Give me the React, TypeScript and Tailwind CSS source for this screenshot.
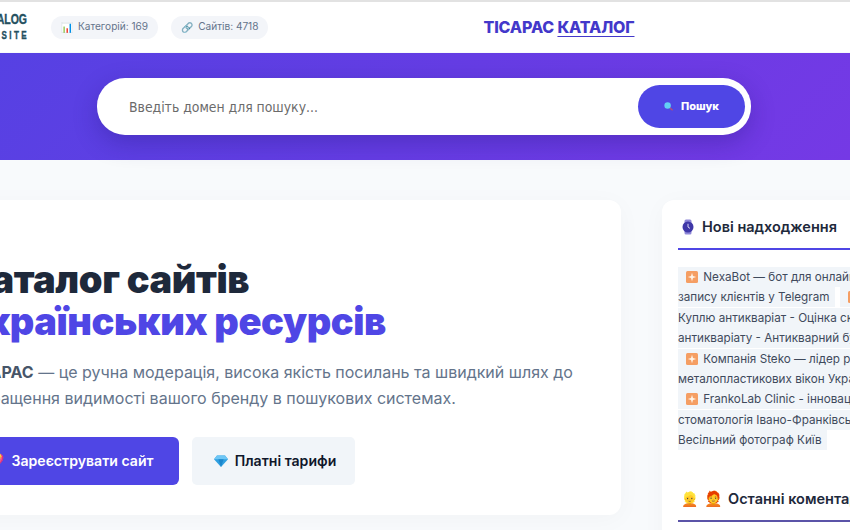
const recentSites = [
  "NexaBot — бот для онлайн-запису клієнтів у Telegram",
  "Куплю антикваріат - Оцінка скупка антикваріату - Антикварний бутик",
  "Компанія Steko — лідер ринку металопластикових вікон України",
  "FrankoLab Clinic - інноваційна стоматологія Івано-Франківськ",
  "Весільний фотограф Київ",
];

function Chip({ icon, label }: { icon: string; label: string }) {
  return (
    <span className="flex h-[23px] items-center gap-[5px] rounded-full bg-[#f3f5f9] px-[10px] text-[10.1px] text-[#64748b]">
      <span className="w-[12px] overflow-hidden text-[10px]">{icon}</span>
      {label}
    </span>
  );
}

function SparkIcon() {
  return (
    <svg viewBox="0 0 12 12" className="mr-[2px] inline-block h-[12px] w-[12px] align-[-2px]">
      <rect width="12" height="12" rx="1.5" fill="#f59e63" />
      <path d="M6 1.8 7 5l3.2 1L7 7l-1 3.2L5 7 1.8 6 5 5z" fill="#fff3e6" />
    </svg>
  );
}

function Diamond({ className }: { className: string }) {
  return (
    <svg viewBox="0 0 14 12" className={className}>
      <path d="M3 0.5h8L14 4.2 7 12 0 4.2z" fill="#2f9fe0" />
      <path d="M3 0.5h8L14 4.2H0z" fill="#6ec6f5" />
      <path d="M4.4 4.2h5.2L7 12z" fill="#1c86cc" />
    </svg>
  );
}

function WatchIcon() {
  return (
    <svg viewBox="0 0 14 16" className="h-[16px] w-[14px]">
      <rect x="3.5" y="0.5" width="7" height="15" rx="1.5" fill="#8f88d8" />
      <circle cx="7" cy="8" r="5.5" fill="#3f37a8" />
      <path d="M7 4.8V8l2 1.4" stroke="#d8d5f5" strokeWidth="1" fill="none" />
    </svg>
  );
}

export default function App() {
  return (
    <div
      className="h-[530px] w-[850px] overflow-hidden bg-[#f8fafc]"
      style={{ fontFamily: "Inter, 'Noto Sans', sans-serif" }}
    >
      <div className="h-[2px] bg-[#e2e2e2]" />
      <header className="flex h-[50px] items-center bg-white">
        <div
          className="ml-[-49px] w-[76px] shrink-0 origin-right scale-x-[0.7] text-right font-bold leading-[16px] text-[#24505f] [-webkit-text-stroke:0.4px_#24505f]"
          style={{ fontFamily: "'Liberation Sans', sans-serif" }}
        >
          <div className="text-[15px] whitespace-nowrap">CATALOG</div>
          <div className="mr-[-3px] text-[11.5px] tracking-[3.5px] whitespace-nowrap">SITE</div>
        </div>
        <div className="ml-[24px] flex gap-[13px]">
          <Chip icon="📊" label="Категорій: 169" />
          <Chip icon="🔗" label="Сайтів: 4718" />
        </div>
        <div className="ml-[215px] text-[16px] font-extrabold tracking-[-0.15px] text-[#4338ca]">
          ТІСАРАС <span className="underline decoration-1 underline-offset-3">КАТАЛОГ</span>
        </div>
      </header>
      <section className="mt-px flex h-[107px] items-center justify-center bg-linear-[135deg] from-[#5641e3] to-[#7539e5]">
        <form className="mr-[2px] flex h-[57px] w-[654px] items-center justify-between rounded-[28px] bg-white pl-[32px] pr-[6px] shadow-[0_8px_24px_rgba(30,20,120,0.3)]">
          <span className="pt-px text-[13.85px] text-[#6b6b6b]" style={{ fontFamily: "'DejaVu Sans Condensed', 'Liberation Sans', sans-serif" }}>
            Введіть домен для пошуку...
          </span>
          <button type="button" className="flex h-[43px] w-[107px] items-center justify-center gap-[8px] rounded-[22px] bg-[#4f46e5] text-[11px] font-extrabold text-white">
            <svg viewBox="0 0 10 10" className="h-[9px] w-[9px]">
              <path d="M6 6l3.5 3.2" stroke="#c0506a" strokeWidth="1.4" />
              <circle cx="4" cy="4" r="3.6" fill="#62d0f5" />
            </svg>
            Пошук
          </button>
        </form>
      </section>
      <main className="ml-[-85px] mt-[40px] flex gap-[41px]">
        <section className="h-[315px] w-[706px] shrink-0 rounded-[12px] bg-white pl-[48px] pt-[58px] shadow-[0_4px_24px_rgba(15,23,42,0.03)]">
          <h1 className="text-[38px] font-black leading-[42px] tracking-[-0.42px] text-[#1e293b]">
            Каталог сайтів
            <br />
            <span className="text-[#4f46e5]">українських ресурсів</span>
          </h1>
          <p className="mt-[18px] text-[16px] leading-[25.5px] text-[#64748b]">
            <b className="font-bold text-[#475569]">ТІСАРАС</b> — це ручна модерація, висока якість посилань та швидкий шлях до
            <br />
            покращення видимості вашого бренду в пошукових системах.
          </p>
          <div className="mt-[26px] flex gap-[13px]">
            <button type="button" className="flex h-[48px] w-[216px] items-center justify-center gap-[7px] rounded-[6px] bg-[#4f46e5] text-[14.1px] font-semibold text-white">
              <span className="text-[13px]">💖</span>
              Зареєструвати сайт
            </button>
            <button type="button" className="flex h-[48px] w-[163px] items-center justify-center gap-[7px] rounded-[5px] bg-[#f1f5f9] pl-[3px] text-[14.1px] font-semibold text-[#0f172a]">
              <Diamond className="h-[12px] w-[14px]" />
              Платні тарифи
            </button>
          </div>
        </section>
        <aside className="h-[400px] w-[247px] shrink-0 rounded-[12px] bg-white px-[16px] pt-[16px] shadow-[0_4px_24px_rgba(15,23,42,0.03)]">
          <h2 className="flex items-center gap-[7px] border-b-2 border-[#4f46e5] pb-[10px] pl-[3px] text-[14.5px] font-semibold leading-[22px] whitespace-nowrap text-[#1e293b]">
            <WatchIcon />
            Нові надходження
          </h2>
          <div className="mt-[17px] text-[11.7px] leading-[20.4px] text-[#3f4a5c]">
            {recentSites.map((site) => (
              <span key={site}>
                <span className="mr-[2px] bg-[#f1f5f9] py-[3px] pl-[8px] pr-[5px]">
                  <SparkIcon /> {site}
                </span>{" "}
              </span>
            ))}
          </div>
          <h2 className="mt-[37px] flex items-center border-b-2 border-[#5b54a8] pb-[10px] pl-[3px] text-[14.5px] font-semibold leading-[22px] whitespace-nowrap text-[#1e293b]">
            <span className="mr-[6px] text-[14px]">👱</span>
            <span className="mr-[5px] text-[15px]">🧑‍🦰</span>
            Останні коментарі
          </h2>
        </aside>
      </main>
    </div>
  );
}
